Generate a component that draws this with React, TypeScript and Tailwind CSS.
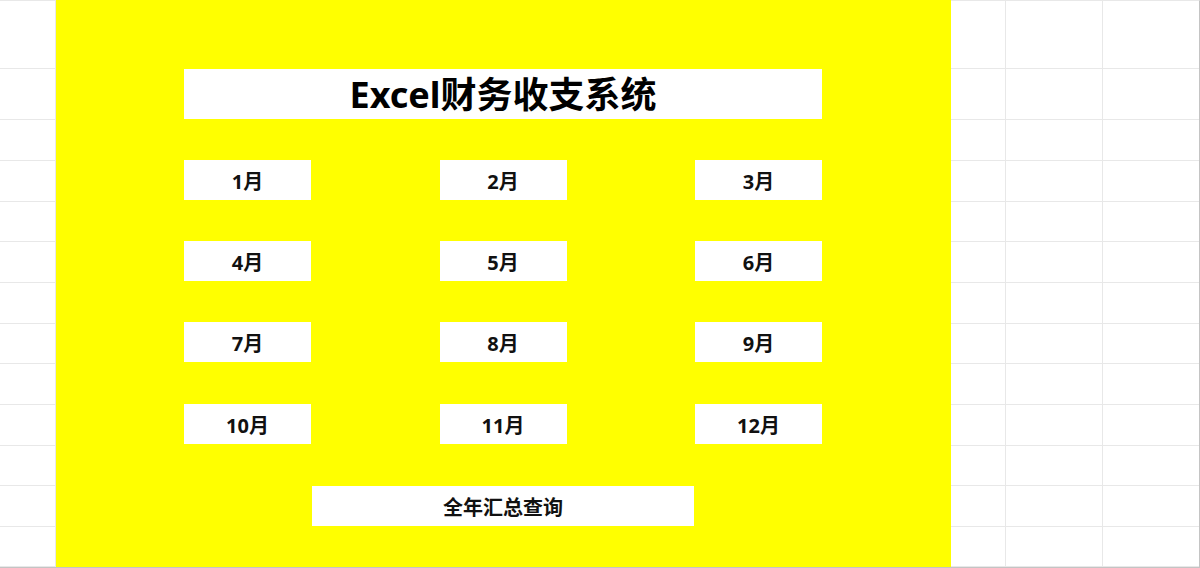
const rowHeights = [68, 51, 41, 41, 40, 41, 41, 40, 41, 41, 40, 41, 40];

const months = ['1月', '2月', '3月', '4月', '5月', '6月', '7月', '8月', '9月', '10月', '11月', '12月'];

const font = { fontFamily: '"Noto Sans", "Noto Sans CJK SC", sans-serif' };

function SheetColumn({ width, last }: { width: string; last?: boolean }) {
  return (
    <div className={`${width} flex shrink-0 flex-col border-t border-[#e8e8e8] ${last ? 'border-r border-r-[#c4c4c4]' : 'border-r'}`}>
      {rowHeights.map((h, i) => (
        <div key={i} className="border-b border-[#e8e8e8]" style={{ height: h }} />
      ))}
    </div>
  );
}

export default function App() {
  return (
    <main className="flex h-[568px] w-[1200px] overflow-hidden border-b border-[#c4c4c4] bg-white" style={font}>
      <SheetColumn width="w-[56px]" />

      <section className="flex w-[895px] shrink-0 flex-col bg-[#ffff00] pl-[128px] pt-[69px]">
        <div className="flex h-[50px] w-[638px] items-center justify-center bg-white pt-[2px]">
          <h1 className="text-[36px] font-bold leading-none text-black">Excel财务收支系统</h1>
        </div>

        <div className="mt-[41px] grid w-[638px] grid-cols-[127px_127px_127px] grid-rows-[40px_40px_41px_40px] justify-between gap-y-[41px]">
          {months.map((m) => (
            <button key={m} className="flex h-[40px] items-center justify-center bg-white pt-[3px] text-[20px] font-bold text-[#111]">
              {m}
            </button>
          ))}
        </div>

        <button className="ml-[128px] mt-[42px] flex h-[40px] w-[382px] items-center justify-center bg-white pt-[3px] text-[20px] font-bold text-[#111]">
          全年汇总查询
        </button>
      </section>

      <SheetColumn width="w-[55px]" />
      <SheetColumn width="w-[97px]" />
      <SheetColumn width="w-[97px]" last />
    </main>
  );
}
